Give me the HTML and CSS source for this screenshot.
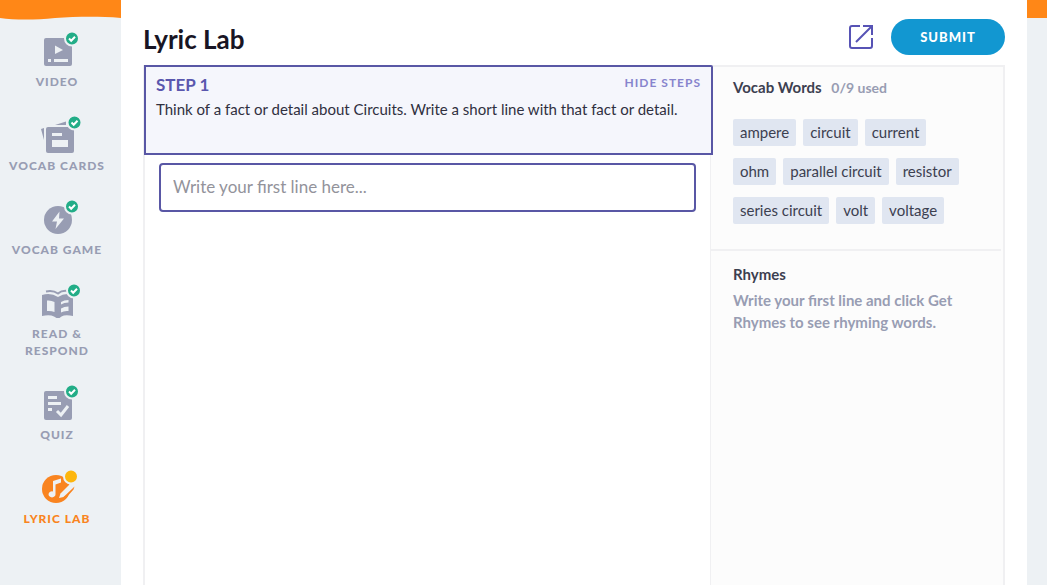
FILE: index.html
```html
<!DOCTYPE html>
<html lang="en">
  <head>
    <meta charset="utf-8">
    <meta name="viewport" content="width=device-width, initial-scale=1">
    <title>Lyric Lab</title>
    <link rel="stylesheet" href="styles.css">
  </head>
  <body>

    <!-- orange strip behind everything -->
    <svg class="wave" viewBox="0 0 1047 20" preserveAspectRatio="none" aria-hidden="true">
      <path d="M0 0H1047V18H121C95 16 75 17 55 18C35 20 15 20 0 18Z"/>
    </svg>

    <div class="layout">
      <nav class="sidebar">
        <a href="#video" class="nav-item">
          <svg class="nav-icon" viewBox="0 0 48 40" aria-hidden="true">
            <rect x="11" y="8" width="28" height="28" rx="2"/>
            <path class="cut" d="M22 15.500V24L30 20ZM15 29h3v3h-3zM21 29h14v3H21z"/>
            <circle class="done" cx="39" cy="8.500" r="7"/>
            <path class="tick" d="M36 8.500L38.200 10.700L42 6.700"/>
          </svg>
          Video
        </a>
        <a href="#cards" class="nav-item">
          <svg class="nav-icon" viewBox="0 0 48 40" aria-hidden="true">
            <path d="M8 15L11 14V26ZM22 11L33 7.500V11Z"/>
            <rect x="13" y="13" width="28" height="26" rx="2"/>
            <path class="cut" d="M19 19h10v3H19zM19 26h16v7H19z"/>
            <circle class="done" cx="41.500" cy="8.500" r="7"/>
            <path class="tick" d="M38.500 8.500L40.700 10.700L44.500 6.700"/>
          </svg>
          Vocab Cards
        </a>
        <a href="#game" class="nav-item">
          <svg class="nav-icon" viewBox="0 0 48 40" aria-hidden="true">
            <circle cx="25" cy="22" r="14"/>
            <path class="cut" d="M26.500 13.500L19 23.500H24L22.500 31L31 20.500H26Z"/>
            <circle class="done" cx="39" cy="8.500" r="7"/>
            <path class="tick" d="M36 8.500L38.200 10.700L42 6.700"/>
          </svg>
          Vocab Game
        </a>
        <a href="#read" class="nav-item">
          <svg class="nav-icon" viewBox="0 0 48 40" aria-hidden="true">
            <path class="page-edge" d="M13 9.500Q20 8 25 11.500Q29 8 35 9"/>
            <path d="M9 13Q18 10.500 25 15Q32 10.500 40 13V34Q32 32.500 28.500 34.500L26.500 36H23.500L21 34.500Q17 32.500 9 34Z"/>
            <path class="cut" d="M14 18.500Q18 18 21.500 20V30Q18 28.500 14 29ZM28 20Q31 18 35.500 18V20.500Q31 20.500 28 22.500ZM28 26.500Q31 24.500 35.500 24.500V29Q31 28.500 28 30.500Z"/>
            <circle class="done" cx="41" cy="8.500" r="7"/>
            <path class="tick" d="M38 8.500L40.200 10.700L44 6.700"/>
          </svg>
          Read &amp;<br>Respond
        </a>
        <a href="#quiz" class="nav-item">
          <svg class="nav-icon" viewBox="0 0 48 40" aria-hidden="true">
            <rect x="11" y="8" width="28" height="29" rx="2"/>
            <path class="cut" d="M15 13h9v3h-9zM15 19h13v3H15zM15 25h4v3h-4z"/>
            <path class="mark" d="M24 28L28 32L35 23"/>
            <circle class="done" cx="39" cy="8.500" r="7"/>
            <path class="tick" d="M36 8.500L38.200 10.700L42 6.700"/>
          </svg>
          Quiz
        </a>
        <a href="#lyric" class="nav-item active">
          <svg class="nav-icon" viewBox="0 0 48 40" aria-hidden="true">
            <circle cx="23" cy="22" r="14"/>
            <path class="cut" d="M20 14L28 11.500V15.500L22.500 17.500V27A3.500 3 0 1 1 20 24.500Z"/>
            <path class="cut" d="M26 31L27.500 26.500L37 17L43 18L39 25L30.500 30Z"/>
            <path d="M30 30.500L39.500 21.500L41.500 19.500L40.500 22.500L33 31Z"/>
            <circle class="current" cx="38" cy="9.500" r="7"/>
          </svg>
          Lyric Lab
        </a>
      </nav>

      <main class="card">
        <header class="card-header">
          <h1>Lyric Lab</h1>
          <button type="button" class="open-button" aria-label="Open in new window">
            <svg viewBox="0 0 24 24" aria-hidden="true">
              <path d="M11 1H3Q1 1 1 3V21Q1 23 3 23H21Q23 23 23 21V13M14 1H23V10M23 1L7 17"/>
            </svg>
          </button>
          <button type="submit" form="lyric-form" class="submit-button">Submit</button>
        </header>

        <div class="workspace">
          <section class="writer">
            <div class="step">
              <div class="step-top">
                <h2>Step 1</h2>
                <button type="button" class="hide-button">Hide Steps</button>
              </div>
              <p>Think of a fact or detail about Circuits. Write a short line with that fact or detail.</p>
            </div>
            <form id="lyric-form">
              <input type="text" class="line-input" aria-label="First line" placeholder="Write your first line here...">
            </form>
          </section>

          <aside class="helper">
            <section class="vocab">
              <h3>Vocab Words <span class="used">0/9 used</span></h3>
              <ul class="words">
                <li>ampere</li>
                <li>circuit</li>
                <li>current</li>
                <li>ohm</li>
                <li>parallel circuit</li>
                <li>resistor</li>
                <li>series circuit</li>
                <li>volt</li>
                <li>voltage</li>
              </ul>
            </section>
            <section class="rhymes">
              <h3>Rhymes</h3>
              <p>Write your first line and click Get Rhymes to see rhyming words.</p>
            </section>
          </aside>
        </div>
      </main>
    </div>

  </body>
</html>
```
FILE: styles.css
```css
* {
  box-sizing: border-box;
}

body {
  margin: 0;
  background-color: #edf1f4;
  color: #3c4050;
  font-family: Lato, sans-serif;
}

h1, h2, h3, p, ul {
  margin: 0;
  padding: 0;
}

button {
  padding: 0;
  border: none;
  background: none;
  font-family: inherit;
  cursor: pointer;
}

.wave {
  position: absolute;
  top: 0;
  left: 0;
  width: 100%;
  height: 20px;
  fill: #ff8717;
}

.layout {
  position: relative;
  display: flex;
  min-height: 100vh;
}

/* sidebar */
.sidebar {
  display: flex;
  flex-direction: column;
  gap: 24px;
  width: 121px;
  padding: 30px 7px 0 0;
}

.nav-item {
  display: flex;
  flex-direction: column;
  align-items: center;
  color: #989db3;
  font-size: 12px;
  font-weight: 900;
  line-height: 17px;
  letter-spacing: 1px;
  text-align: center;
  text-decoration: none;
  text-transform: uppercase;
}

.nav-item.active {
  color: #f98420;
}

.nav-icon {
  width: 48px;
  height: 40px;
  margin-bottom: 3px;
  fill: currentColor;
}

.cut {
  fill: #edf1f4;
}

.done, .current {
  fill: #22ad87;
  stroke: #edf1f4;
  stroke-width: 2;
}

.current {
  fill: #fdb60d;
}

.tick, .mark, .page-edge {
  fill: none;
  stroke: #ffffff;
  stroke-width: 2;
}

.mark {
  stroke: #edf1f4;
  stroke-width: 3;
}

.page-edge {
  stroke: currentColor;
}

/* main card */
.card {
  display: flex;
  flex: 1;
  flex-direction: column;
  margin-right: 20px;
  padding: 19px 22px 0;
  background-color: #ffffff;
}

.card-header {
  display: flex;
  align-items: center;
  height: 36px;
  margin-bottom: 10px;
}

h1 {
  flex: 1;
  padding-top: 4px;
  color: #181524;
  font-size: 26px;
  line-height: 32px;
}

.open-button {
  width: 24px;
  height: 24px;
  margin-right: 18px;
}

.open-button svg {
  display: block;
  fill: none;
  stroke: #5753b5;
  stroke-width: 2;
}

.submit-button {
  width: 114px;
  height: 36px;
  border-radius: 18px;
  background-color: #1297d1;
  color: #ffffff;
  font-size: 13px;
  font-weight: 900;
  letter-spacing: 1px;
  text-transform: uppercase;
}

.workspace {
  display: grid;
  flex: 1;
  grid-template-columns: 1fr 295px;
}

.writer {
  border-left: 2px solid #f0f0f2;
}

.step {
  position: relative;
  min-height: 90px;
  margin: 0 -3px 0 -1px;
  padding: 8px 10px;
  border: 2px solid #5957a5;
  border-top-right-radius: 2px;
  background-color: #f5f6fc;
}

.step-top {
  display: flex;
  align-items: flex-start;
  justify-content: space-between;
  line-height: 20px;
}

h2 {
  color: #5a57ae;
  font-size: 17px;
  text-transform: uppercase;
}

.hide-button {
  color: #8784cd;
  font-size: 12px;
  font-weight: bold;
  line-height: 16px;
  letter-spacing: 1px;
  text-transform: uppercase;
}

.step p {
  margin-top: 2px;
  color: #30303f;
  font-size: 15px;
  line-height: 24px;
}

.line-input {
  display: block;
  width: calc(100% - 28px);
  height: 49px;
  margin: 8px 14px;
  padding: 0 12px 2px;
  border: 2px solid #5957a5;
  border-radius: 4px;
  font-family: inherit;
  font-size: 17px;
}

.line-input::placeholder {
  color: #93939b;
}

/* right column */
.helper {
  border: 2px solid #f0f0f2;
  border-width: 2px 2px 0 1px;
  background-color: #fcfcfc;
}

.vocab {
  margin-right: 2px;
  padding: 10px 30px 25px 22px;
  border-bottom: 2px solid #f0f0f2;
}

h3 {
  color: #3c4050;
  font-size: 15px;
  line-height: 20px;
}

.used {
  margin-left: 6px;
  color: #989db3;
  font-size: 14px;
}

.words {
  display: flex;
  flex-wrap: wrap;
  gap: 12px 7px;
  margin-top: 21px;
  list-style: none;
}

.words li {
  padding: 0 7px;
  border-radius: 2px;
  background-color: #e0e6f1;
  font-size: 15px;
  line-height: 27px;
}

.rhymes {
  padding: 13px 20px 0 22px;
}

.rhymes p {
  margin-top: 5px;
  color: #989db3;
  font-size: 15px;
  font-weight: bold;
  line-height: 22px;
}
```
